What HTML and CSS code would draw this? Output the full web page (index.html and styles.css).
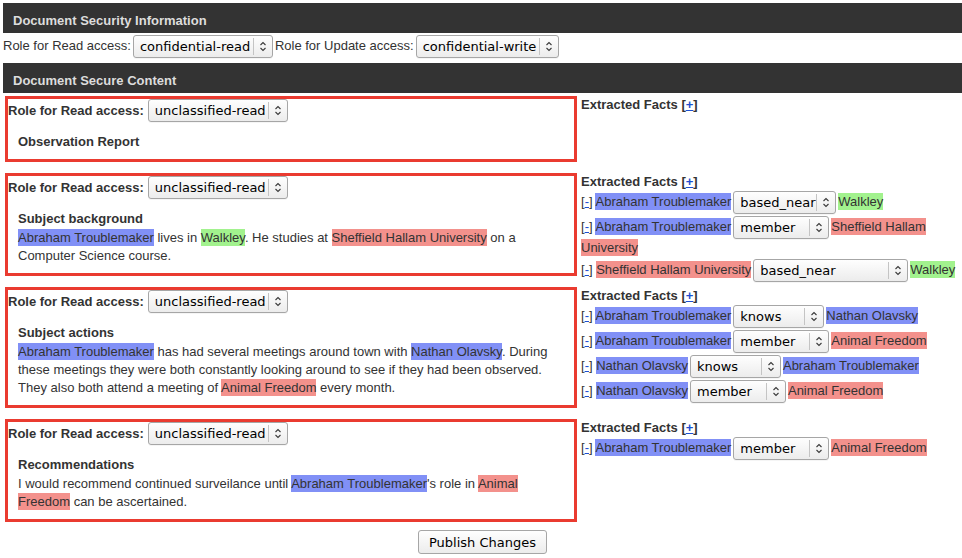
FILE: index.html
```html
<!DOCTYPE html>
<html>
<head>
<meta charset="utf-8">
<link rel="stylesheet" href="styles.css">
</head>
<body>
<div class="bar">Document Security Information</div>
<div class="security-row">
  <label class="lbl">Role for Read access:</label>
  <span class="sel w140"><select><option>confidential-read</option></select><svg class="chev" width="20" height="23" viewBox="0 0 20 23"><line x1="0.5" y1="3" x2="0.5" y2="20" stroke="#c4c4c4"/><path d="M7.5 10 L10 7.5 L12.5 10 M7.5 13 L10 15.5 L12.5 13" fill="none" stroke="#3a3a3a" stroke-width="1.1"/></svg></span>
  <label class="lbl lbl-after">Role for Update access:</label>
  <span class="sel w143"><select><option>confidential-write</option></select><svg class="chev" width="20" height="23" viewBox="0 0 20 23"><line x1="0.5" y1="3" x2="0.5" y2="20" stroke="#c4c4c4"/><path d="M7.5 10 L10 7.5 L12.5 10 M7.5 13 L10 15.5 L12.5 13" fill="none" stroke="#3a3a3a" stroke-width="1.1"/></svg></span>
</div>
<div class="bar">Document Secure Content</div>

<div class="sections">
  <div class="box">
    <div class="box-head"><span class="blbl">Role for Read access:</span><span class="sel w140"><select><option>unclassified-read</option></select><svg class="chev" width="20" height="23" viewBox="0 0 20 23"><line x1="0.5" y1="3" x2="0.5" y2="20" stroke="#c4c4c4"/><path d="M7.5 10 L10 7.5 L12.5 10 M7.5 13 L10 15.5 L12.5 13" fill="none" stroke="#3a3a3a" stroke-width="1.1"/></svg></span></div>
    <div class="box-body">
      <div class="title">Observation Report</div>
    </div>
  </div>
  <div class="facts">
    <div class="facts-head">Extracted Facts [<a href="#">+</a>]</div>
  </div>

  <div class="box">
    <div class="box-head"><span class="blbl">Role for Read access:</span><span class="sel w140"><select><option>unclassified-read</option></select><svg class="chev" width="20" height="23" viewBox="0 0 20 23"><line x1="0.5" y1="3" x2="0.5" y2="20" stroke="#c4c4c4"/><path d="M7.5 10 L10 7.5 L12.5 10 M7.5 13 L10 15.5 L12.5 13" fill="none" stroke="#3a3a3a" stroke-width="1.1"/></svg></span></div>
    <div class="box-body">
      <div class="title">Subject background</div>
      <p class="text"><span class="hl-p">Abraham Troublemaker</span> lives in <span class="hl-g">Walkley</span>. He studies at <span class="hl-r">Sheffield Hallam University</span> on a Computer Science course.</p>
    </div>
  </div>
  <div class="facts">
    <div class="facts-head">Extracted Facts [<a href="#">+</a>]</div>
    <div class="fact">[<a href="#">-</a>] <span class="hl-p">Abraham Troublemaker</span><span class="sel w102"><select><option>based_near</option></select><svg class="chev" width="20" height="23" viewBox="0 0 20 23"><line x1="0.5" y1="3" x2="0.5" y2="20" stroke="#c4c4c4"/><path d="M7.5 10 L10 7.5 L12.5 10 M7.5 13 L10 15.5 L12.5 13" fill="none" stroke="#3a3a3a" stroke-width="1.1"/></svg></span><span class="hl-g">Walkley</span></div>
    <div class="fact">[<a href="#">-</a>] <span class="hl-p">Abraham Troublemaker</span><span class="sel w95"><select><option>member</option></select><svg class="chev" width="20" height="23" viewBox="0 0 20 23"><line x1="0.5" y1="3" x2="0.5" y2="20" stroke="#c4c4c4"/><path d="M7.5 10 L10 7.5 L12.5 10 M7.5 13 L10 15.5 L12.5 13" fill="none" stroke="#3a3a3a" stroke-width="1.1"/></svg></span><span class="hl-r">Sheffield Hallam University</span></div>
    <div class="fact">[<a href="#">-</a>] <span class="hl-r">Sheffield Hallam University</span><span class="sel w155"><select><option>based_near</option></select><svg class="chev" width="20" height="23" viewBox="0 0 20 23"><line x1="0.5" y1="3" x2="0.5" y2="20" stroke="#c4c4c4"/><path d="M7.5 10 L10 7.5 L12.5 10 M7.5 13 L10 15.5 L12.5 13" fill="none" stroke="#3a3a3a" stroke-width="1.1"/></svg></span><span class="hl-g">Walkley</span></div>
  </div>

  <div class="box">
    <div class="box-head"><span class="blbl">Role for Read access:</span><span class="sel w140"><select><option>unclassified-read</option></select><svg class="chev" width="20" height="23" viewBox="0 0 20 23"><line x1="0.5" y1="3" x2="0.5" y2="20" stroke="#c4c4c4"/><path d="M7.5 10 L10 7.5 L12.5 10 M7.5 13 L10 15.5 L12.5 13" fill="none" stroke="#3a3a3a" stroke-width="1.1"/></svg></span></div>
    <div class="box-body">
      <div class="title">Subject actions</div>
      <p class="text"><span class="hl-p">Abraham Troublemaker</span> has had several meetings around town with <span class="hl-p">Nathan Olavsky</span>. During these meetings they were both constantly looking around to see if they had been observed. They also both attend a meeting of <span class="hl-r">Animal Freedom</span> every month.</p>
    </div>
  </div>
  <div class="facts">
    <div class="facts-head">Extracted Facts [<a href="#">+</a>]</div>
    <div class="fact">[<a href="#">-</a>] <span class="hl-p">Abraham Troublemaker</span><span class="sel w90"><select><option>knows</option></select><svg class="chev" width="20" height="23" viewBox="0 0 20 23"><line x1="0.5" y1="3" x2="0.5" y2="20" stroke="#c4c4c4"/><path d="M7.5 10 L10 7.5 L12.5 10 M7.5 13 L10 15.5 L12.5 13" fill="none" stroke="#3a3a3a" stroke-width="1.1"/></svg></span><span class="hl-p">Nathan Olavsky</span></div>
    <div class="fact">[<a href="#">-</a>] <span class="hl-p">Abraham Troublemaker</span><span class="sel w95"><select><option>member</option></select><svg class="chev" width="20" height="23" viewBox="0 0 20 23"><line x1="0.5" y1="3" x2="0.5" y2="20" stroke="#c4c4c4"/><path d="M7.5 10 L10 7.5 L12.5 10 M7.5 13 L10 15.5 L12.5 13" fill="none" stroke="#3a3a3a" stroke-width="1.1"/></svg></span><span class="hl-r">Animal Freedom</span></div>
    <div class="fact">[<a href="#">-</a>] <span class="hl-p">Nathan Olavsky</span><span class="sel w90"><select><option>knows</option></select><svg class="chev" width="20" height="23" viewBox="0 0 20 23"><line x1="0.5" y1="3" x2="0.5" y2="20" stroke="#c4c4c4"/><path d="M7.5 10 L10 7.5 L12.5 10 M7.5 13 L10 15.5 L12.5 13" fill="none" stroke="#3a3a3a" stroke-width="1.1"/></svg></span><span class="hl-p">Abraham Troublemaker</span></div>
    <div class="fact">[<a href="#">-</a>] <span class="hl-p">Nathan Olavsky</span><span class="sel w95"><select><option>member</option></select><svg class="chev" width="20" height="23" viewBox="0 0 20 23"><line x1="0.5" y1="3" x2="0.5" y2="20" stroke="#c4c4c4"/><path d="M7.5 10 L10 7.5 L12.5 10 M7.5 13 L10 15.5 L12.5 13" fill="none" stroke="#3a3a3a" stroke-width="1.1"/></svg></span><span class="hl-r">Animal Freedom</span></div>
  </div>

  <div class="box">
    <div class="box-head"><span class="blbl">Role for Read access:</span><span class="sel w140"><select><option>unclassified-read</option></select><svg class="chev" width="20" height="23" viewBox="0 0 20 23"><line x1="0.5" y1="3" x2="0.5" y2="20" stroke="#c4c4c4"/><path d="M7.5 10 L10 7.5 L12.5 10 M7.5 13 L10 15.5 L12.5 13" fill="none" stroke="#3a3a3a" stroke-width="1.1"/></svg></span></div>
    <div class="box-body">
      <div class="title">Recommendations</div>
      <p class="text">I would recommend continued surveilance until <span class="hl-p">Abraham Troublemaker</span>'s role in <span class="hl-r">Animal Freedom</span> can be ascertained.</p>
    </div>
  </div>
  <div class="facts">
    <div class="facts-head">Extracted Facts [<a href="#">+</a>]</div>
    <div class="fact">[<a href="#">-</a>] <span class="hl-p">Abraham Troublemaker</span><span class="sel w95"><select><option>member</option></select><svg class="chev" width="20" height="23" viewBox="0 0 20 23"><line x1="0.5" y1="3" x2="0.5" y2="20" stroke="#c4c4c4"/><path d="M7.5 10 L10 7.5 L12.5 10 M7.5 13 L10 15.5 L12.5 13" fill="none" stroke="#3a3a3a" stroke-width="1.1"/></svg></span><span class="hl-r">Animal Freedom</span></div>
  </div>
</div>

<div class="actions">
  <button class="btn">Publish Changes</button>
</div>
</body>
</html>
```
FILE: styles.css
```css
html, body {
  background: #fff;
}
body {
  margin: 3px 0 0 3px;
  font-family: "Liberation Sans", Arial, sans-serif;
  font-size: 13px;
  color: #333;
  line-height: 18px;
}
.bar {
  background: #333;
  color: #ddd;
  font-weight: bold;
  height: 30px;
  line-height: 35px;
  padding-left: 10px;
}
.security-row {
  display: flex;
  align-items: center;
  height: 26px;
  margin-bottom: 4px;
}
.lbl {
  margin-right: 2px;
}
.lbl-after {
  margin-left: 2px;
}
.sel {
  position: relative;
  display: inline-block;
  height: 23px;
  vertical-align: middle;
}
.sel select {
  -webkit-appearance: none;
  appearance: none;
  width: 100%;
  height: 23px;
  box-sizing: border-box;
  margin: 0;
  padding: 0 19px 0 6px;
  border: 1px solid #a6a6a6;
  border-radius: 3px;
  background: linear-gradient(#fefefe, #ececec);
  box-shadow: 0 1px 0 rgba(0,0,0,0.04);
  font-family: "DejaVu Sans", sans-serif;
  font-size: 13px;
  color: #000;
  line-height: 21px;
  text-overflow: clip;
}
.sel .chev {
  position: absolute;
  right: 0;
  top: 0;
  pointer-events: none;
}
.w140 { width: 140px; }
.w143 { width: 143px; }
.w102 { width: 103px; }
.w155 { width: 155px; }
.w90 { width: 91px; }
.w95 { width: 96px; }

.sections {
  display: grid;
  grid-template-columns: 572px 1fr;
  column-gap: 4px;
  margin: 3px 0 0 2px;
  align-items: start;
}
.box {
  border: 3px solid #ea3b30;
  margin-bottom: 11px;
}
.box-head {
  display: flex;
  align-items: center;
  height: 23px;
}
.blbl {
  font-weight: bold;
  margin-right: 4px;
}
.box-body {
  padding: 11px 20px 8px 10px;
}
.title {
  font-weight: bold;
}
.text {
  margin: 1px 0 0;
}
.hl-p { background: #8190f6; padding: 1px 0; }
.hl-g { background: #a2f28e; padding: 1px 0; }
.hl-r { background: #f3918c; padding: 1px 0; }

.facts {
  padding-bottom: 2px;
}
.facts-head {
  font-weight: bold;
  height: 18px;
}
.facts a {
  color: #1c4fd0;
}
.fact {
  margin-bottom: 2px;
}
.fact .sel {
  margin: 0 2px;
}
.actions {
  display: flex;
  justify-content: center;
  margin-top: -3px;
}
.btn {
  font-family: "DejaVu Sans", sans-serif;
  font-size: 13px;
  color: #000;
  height: 24px;
  padding: 0 10px;
  border: 1px solid #a6a6a6;
  border-radius: 3px;
  background: linear-gradient(#fefefe, #ececec);
}
```
